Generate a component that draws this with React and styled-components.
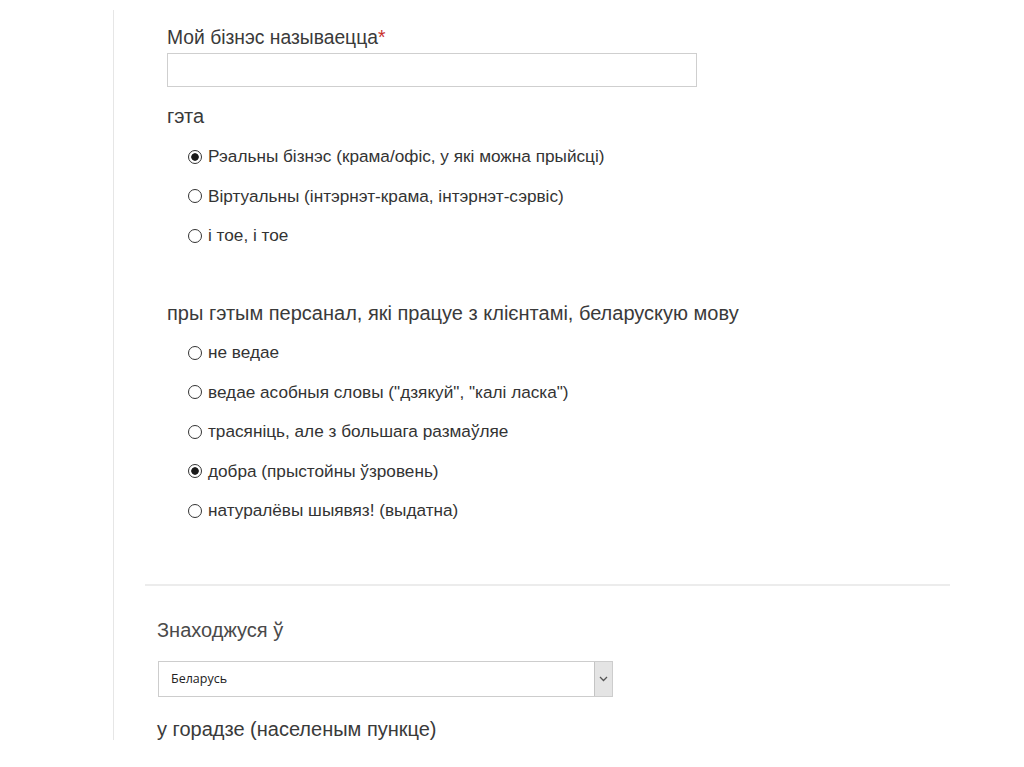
import React from 'react'
import styled, { createGlobalStyle } from 'styled-components'

const GlobalStyle = createGlobalStyle`
  html, body {
    margin: 0;
    padding: 0;
    background: #ffffff;
  }
  body {
    font-family: "Liberation Sans", Arial, sans-serif;
    color: #333333;
  }
`

const businessTypes = [
  { label: 'Рэальны бізнэс (крама/офіс, у які можна прыйсці)', checked: true },
  { label: 'Віртуальны (інтэрнэт-крама, інтэрнэт-сэрвіс)', checked: false },
  { label: 'і тое, і тое', checked: false },
]

const languageLevels = [
  { label: 'не ведае', checked: false },
  { label: 'ведае асобныя словы ("дзякуй", "калі ласка")', checked: false },
  { label: 'трасяніць, але з большага размаўляе', checked: false },
  { label: 'добра (прыстойны ўзровень)', checked: true },
  { label: 'натуралёвы шыявяз! (выдатна)', checked: false },
]

const RadioGroup = ({ name, items, ...rest }) => (
  <RadioList {...rest}>
    {items.map((item, i) => (
      <RadioRow key={i}>
        <Radio type="radio" name={name} defaultChecked={item.checked} />
        <RadioText>{item.label}</RadioText>
      </RadioRow>
    ))}
  </RadioList>
)

const App = () => {
  return (
    <>
      <GlobalStyle />
      <Page>
        <Section>
          <Label $size={19.3}>
            Мой бізнэс называецца<Required>*</Required>
          </Label>
          <TextInput type="text" />
          <Label $top={18}>гэта</Label>
          <RadioGroup name="kind" items={businessTypes} $top={10} />
          <Label $top={46}>пры гэтым персанал, які працуе з клієнтамі, беларускую мову</Label>
          <RadioGroup name="lang" items={languageLevels} $top={9} />
        </Section>
        <Divider />
        <LocationSection>
          <Label $top={33} $soft>Знаходжуся ў</Label>
          <SelectBox>
            <SelectValue>Беларусь</SelectValue>
            <SelectArrow>
              <svg width="9" height="6" viewBox="0 0 9 6" fill="none">
                <path d="M1 1l3.5 3.5L8 1" stroke="#555" strokeWidth="1.3" />
              </svg>
            </SelectArrow>
          </SelectBox>
          <Label $top={21}>у горадзе (населеным пункце)</Label>
        </LocationSection>
      </Page>
    </>
  )
}

const Page = styled.div`
  margin-left: 113px;
  margin-top: 10px;
  height: 730px;
  border-left: 1px solid #e6e6e6;
  box-sizing: border-box;
  padding-top: 17px;
  overflow: hidden;
`
const Section = styled.div`
  padding-left: 53px;
  display: flex;
  flex-direction: column;
  align-items: flex-start;
`
const LocationSection = styled.div`
  padding-left: 43px;
  display: flex;
  flex-direction: column;
  align-items: flex-start;
`
const Label = styled.div`
  font-size: ${(p) => p.$size || 20}px;
  line-height: 22px;
  margin-top: ${(p) => p.$top || 0}px;
  color: ${(p) => (p.$soft ? '#4a4a4a' : '#3a3a3a')};
`
const Required = styled.span`
  color: #c9302c;
`
const TextInput = styled.input`
  margin-top: 4px;
  width: 530px;
  height: 34px;
  box-sizing: border-box;
  border: 1px solid #cfcfcf;
  background: #fff;
  outline: none;
`
const RadioList = styled.div`
  margin-top: ${(p) => p.$top || 0}px;
  padding-left: 21px;
  display: flex;
  flex-direction: column;
`
const RadioRow = styled.label`
  height: 39.6px;
  display: flex;
  align-items: center;
  gap: 6px;
`
const Radio = styled.input`
  appearance: none;
  margin: 0;
  width: 14px;
  height: 14px;
  border: 1px solid #333;
  border-radius: 50%;
  box-sizing: border-box;
  background: #fff;
  &:checked {
    background: radial-gradient(circle, #1a1a1a 0 3.4px, #fff 4.1px);
  }
`
const RadioText = styled.span`
  font-size: 17.2px;
  color: #333;
`
const Divider = styled.div`
  margin: 53px 0 0 31px;
  width: 805px;
  height: 2px;
  background: #ececec;
`
const SelectBox = styled.div`
  margin-top: 20px;
  margin-left: 1px;
  width: 455px;
  height: 36px;
  box-sizing: border-box;
  border: 1px solid #cdcdcd;
  display: flex;
  align-items: stretch;
`
const SelectValue = styled.div`
  flex: 1;
  display: flex;
  align-items: center;
  padding-left: 12px;
  font-family: "Open Sans", "Noto Sans", sans-serif;
  font-size: 12.5px;
  color: #222;
`
const SelectArrow = styled.div`
  width: 17px;
  background: #e4e4e4;
  border-left: 1px solid #c4c4c4;
  display: flex;
  align-items: center;
  justify-content: center;
`

export default App
